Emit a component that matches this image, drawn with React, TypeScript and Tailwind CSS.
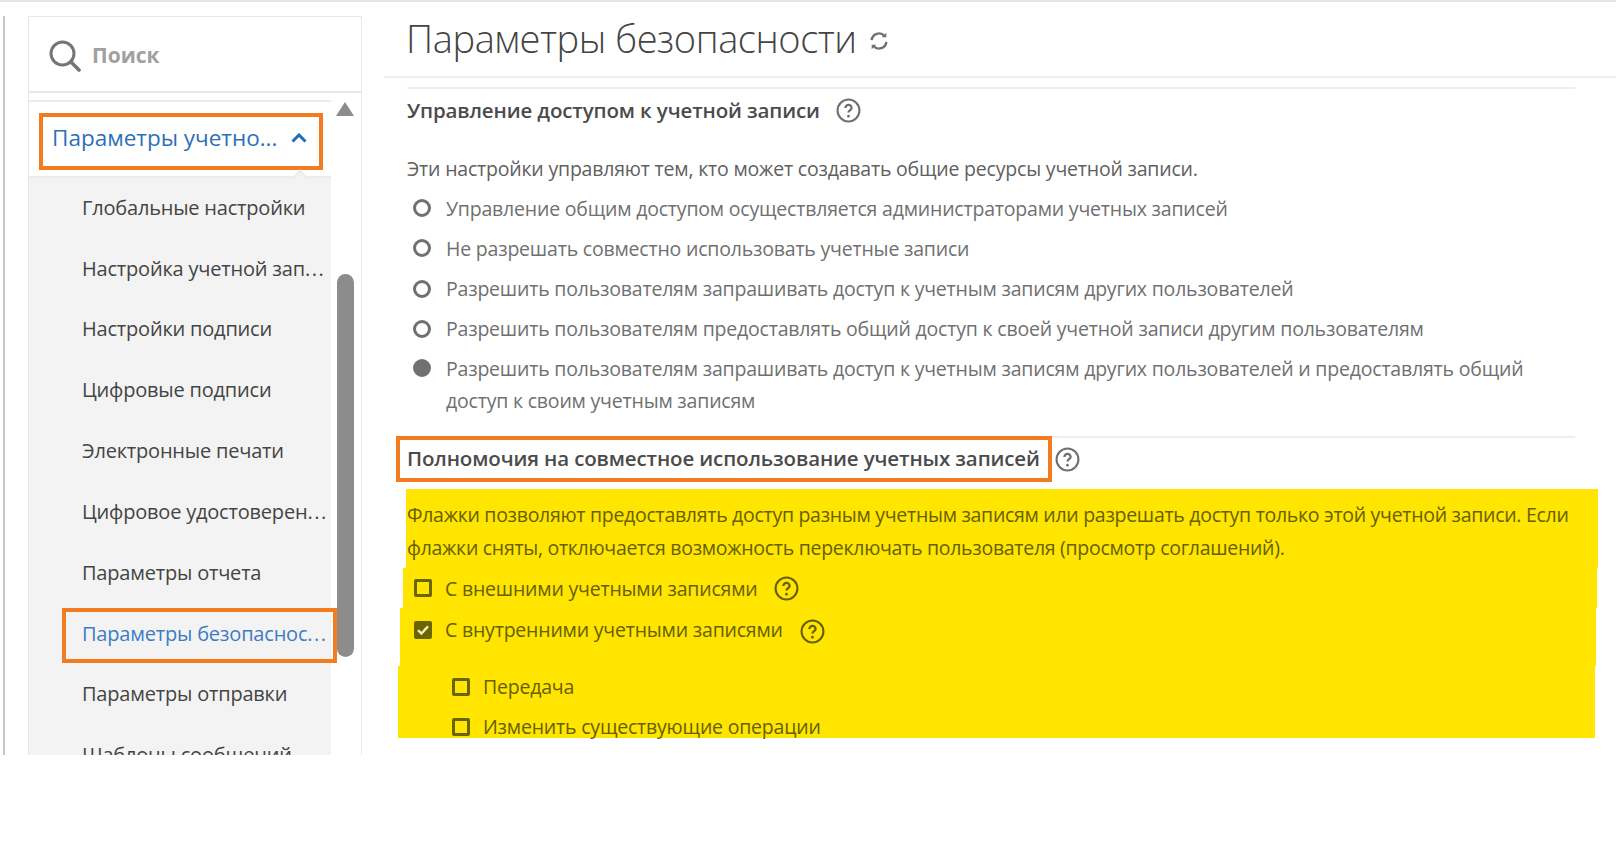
const menuItems = [
  "Глобальные настройки",
  "Настройка учетной зап...",
  "Настройки подписи",
  "Цифровые подписи",
  "Электронные печати",
  "Цифровое удостоверен...",
  "Параметры отчета",
  "Параметры безопаснос...",
  "Параметры отправки",
  "Шаблоны сообщений",
];

const radios = [
  "Управление общим доступом осуществляется администраторами учетных записей",
  "Не разрешать совместно использовать учетные записи",
  "Разрешить пользователям запрашивать доступ к учетным записям других пользователей",
  "Разрешить пользователям предоставлять общий доступ к своей учетной записи другим пользователям",
];

function Help({ className }: { className: string }) {
  return (
    <svg viewBox="0 0 24 24" fill="none" stroke="currentColor" className={`h-[25px] w-[25px] shrink-0 ${className}`}>
      <circle cx="12" cy="12" r="10.5" strokeWidth="2" />
      <path d="M9 9.6a3 3 0 0 1 6 0c0 2-3 2.2-3 4.4" strokeWidth="2.2" />
      <circle cx="12" cy="17.4" r="1.3" fill="currentColor" stroke="none" />
    </svg>
  );
}

function Radio({ checked }: { checked?: boolean }) {
  return (
    <span className={`h-[18px] w-[18px] shrink-0 rounded-full border-[3px] border-[#707070] ${checked ? "bg-[#707070]" : ""}`} />
  );
}

function Check({ checked }: { checked?: boolean }) {
  if (checked) {
    return (
      <svg viewBox="0 0 18 18" className="h-[18px] w-[18px] shrink-0">
        <rect width="18" height="18" rx="2" fill="#6b6500" />
        <path d="M4 9.2l3.4 3.4L14 5.4" fill="none" stroke="#f4ecc0" strokeWidth="2.4" />
      </svg>
    );
  }
  return <span className="h-[18px] w-[18px] shrink-0 rounded-[2px] border-[3px] border-[#6b6500]" />;
}

// the dots in the reference sit wider apart than the font's
function MenuLabel({ text }: { text: string }) {
  if (!text.endsWith("...")) return <span>{text}</span>;
  return (
    <span>
      {text.slice(0, -3)}
      <span className="tracking-[1.5px]">...</span>
    </span>
  );
}

function Sidebar() {
  return (
    <aside className="ml-[3px] flex w-[359px] shrink-0 border-l-2 border-[#c8c8c8] pl-[23px]">
      <div className="flex w-[334px] flex-col border-x border-t border-[#e8e8e8]">
        <div className="flex h-[76px] shrink-0 items-center gap-[11px] border-b-2 border-[#e8e8e8] pl-[20px] pt-[3px]">
          <svg viewBox="0 0 32 32" fill="none" stroke="#757575" strokeWidth="3" className="h-[32px] w-[32px]">
            <circle cx="13.5" cy="13.5" r="11.5" />
            <path d="M22 22l8 8" strokeLinecap="round" strokeWidth="3.6" />
          </svg>
          <span className="text-[21px] font-bold text-[#a0a0a0]">Поиск</span>
        </div>
        <div className="flex min-h-0 flex-1 pt-[7px]">
          <div className="flex w-[302px] shrink-0 flex-col">
            <div className="flex h-[78px] shrink-0 items-end border-y-2 border-[#ececec] pb-[6px]">
              <div className="ml-[10px] flex h-[57px] w-[284px] items-center justify-between border-4 border-[#f47c20] pb-[7px] pl-[9px] pr-[12px]">
                <span className="text-[22.5px] text-[#2c6fb7]">Параметры учетно...</span>
                <svg viewBox="0 0 16 10" fill="none" stroke="#1f6db5" strokeWidth="3" className="h-[10px] w-[16px]">
                  <path d="M1.5 8.5L8 2l6.5 6.5" />
                </svg>
              </div>
            </div>
            <div className="relative min-h-0 flex-1 bg-[#f3f3f3]">
              <span className="absolute -top-[6px] left-[265px] h-[12px] w-[12px] rotate-45 border-l-2 border-t-2 border-[#ececec] bg-[#f3f3f3]" />
              {menuItems.map((item, i) =>
                i === 7 ? (
                  <div key={item} className="relative z-10 ml-[33px] mr-[-6px] mt-[4px] mb-[2px] flex h-[55px] items-center border-4 border-[#f47c20] pb-[3px] pl-[16px] text-[20px] tracking-[-0.2px] whitespace-nowrap text-[#3d7cc4]">
                    <MenuLabel text={item} />
                  </div>
                ) : (
                  <div key={item} className="relative flex h-[60.8px] items-center pb-px pl-[53px] text-[20px] tracking-[-0.2px] whitespace-nowrap text-[#444444]">
                    <MenuLabel text={item} />
                  </div>
                ),
              )}
            </div>
          </div>
          <div className="flex flex-1 flex-col items-center bg-white pr-[2px] pt-[2px]">
            <span className="h-0 w-0 border-x-[9px] border-b-[14px] border-x-transparent border-b-[#8c8c8c]" />
            <span className="mt-[158px] h-[383px] w-[17px] rounded-full bg-[#8c8c8c]" />
          </div>
        </div>
      </div>
    </aside>
  );
}

export default function App() {
  return (
    <div className="h-[854px] w-[1616px] overflow-hidden bg-white font-['Open_Sans',sans-serif]">
      <div className="flex h-[755px] overflow-hidden border-t-2 border-[#e6e6e6] pt-[14px]">
        <Sidebar />
        <main className="min-w-0 flex-1 pl-[22px]">
          <div className="-mt-[16px] flex h-[76px] items-center gap-[11px] pl-[22px]">
            <h1 className="text-[38px] font-light tracking-[-0.42px] text-[#444444]">Параметры безопасности</h1>
            <svg viewBox="0 0 24 24" fill="none" stroke="#707070" strokeWidth="2.6" className="mt-[6px] h-[22px] w-[22px]">
              <path d="M4 11a8 8 0 0 1 14-4.5M20 13a8 8 0 0 1-14 4.5" />
              <path d="M20 3v5h-5z" fill="#707070" stroke="none" />
              <path d="M4 21v-5h5z" fill="#707070" stroke="none" />
            </svg>
          </div>
          <div className="border-t-2 border-[#eeeeee] pl-[23px] pr-[41px] pt-[9px]">
            <section className="border-t-2 border-[#eeeeee]">
              <div className="flex h-[42px] items-center gap-[16px]">
                <h2 className="text-[20.5px] font-semibold tracking-[-0.13px] text-[#4b4b4b]">Управление доступом к учетной записи</h2>
                <Help className="text-[#707070]" />
              </div>
              <p className="mt-[25px] text-[19.5px] leading-[26px] tracking-[-0.2px] text-[#606060]">Эти настройки управляют тем, кто может создавать общие ресурсы учетной записи.</p>
              <div className="mt-[6px] flex flex-col pl-[6px] text-[19.5px] tracking-[-0.2px] text-[#707070]">
                {radios.map((text) => (
                  <div key={text} className="flex h-[40.3px] items-center gap-[15px] whitespace-nowrap">
                    <Radio />
                    {text}
                  </div>
                ))}
                <div className="mt-[4px] flex gap-[15px] leading-[32px]">
                  <span className="mt-[6px] flex">
                    <Radio checked />
                  </span>
                  <span>
                    Разрешить пользователям запрашивать доступ к учетным записям других пользователей и предоставлять общий доступ к своим учетным записям
                  </span>
                </div>
              </div>
            </section>
            <section className="mt-[19px] border-t-2 border-[#eeeeee]">
              <div className="-mt-[2px] flex items-center gap-[3px]">
                <div className="-ml-[11px] flex h-[46px] w-[656px] items-center border-4 border-[#f47c20] pb-[2px] pl-[7px]">
                  <h2 className="text-[20.5px] font-semibold tracking-[-0.13px] whitespace-nowrap text-[#4b4b4b]">Полномочия на совместное использование учетных записей</h2>
                </div>
                <Help className="text-[#707070]" />
              </div>
              <div className="mt-[7px] text-[19.5px] tracking-[-0.2px] text-[#666000]">
                <div className="-ml-px -mr-[23px] bg-[#ffe500] pb-[4px] pl-px pr-[16px] pt-[9px] leading-[33px] tracking-[-0.29px]">
                  Флажки позволяют предоставлять доступ разным учетным записям или разрешать доступ только этой учетной записи. Если флажки сняты, отключается возможность переключать пользователя (просмотр соглашений).
                </div>
                <div className="-ml-[4px] -mr-[22px] flex h-[40px] items-center gap-[13px] bg-[#ffe500] pl-[11px]">
                  <Check />
                  С внешними учетными записями
                  <Help className="ml-[4px]" />
                </div>
                <div className="-ml-[7px] -mr-[21px] flex h-[58px] items-start gap-[13px] bg-[#ffe500] pl-[14px] pt-[13px]">
                  <Check checked />
                  <span className="-mt-[4px] leading-[26px]">С внутренними учетными записями</span>
                  <Help className="-mt-[2px] ml-[4px]" />
                </div>
                <div className="-ml-[9px] -mr-[20px] flex h-[72px] flex-col bg-[#ffe500] pl-[54px]">
                  <div className="flex h-[41px] shrink-0 items-center gap-[13px]">
                    <Check />
                    Передача
                  </div>
                  <div className="flex h-[31px] shrink-0 items-start gap-[13px] pt-[11px]">
                    <Check />
                    <span className="-mt-[4px] leading-[26px]">Изменить существующие операции</span>
                  </div>
                </div>
              </div>
            </section>
          </div>
        </main>
      </div>
    </div>
  );
}
